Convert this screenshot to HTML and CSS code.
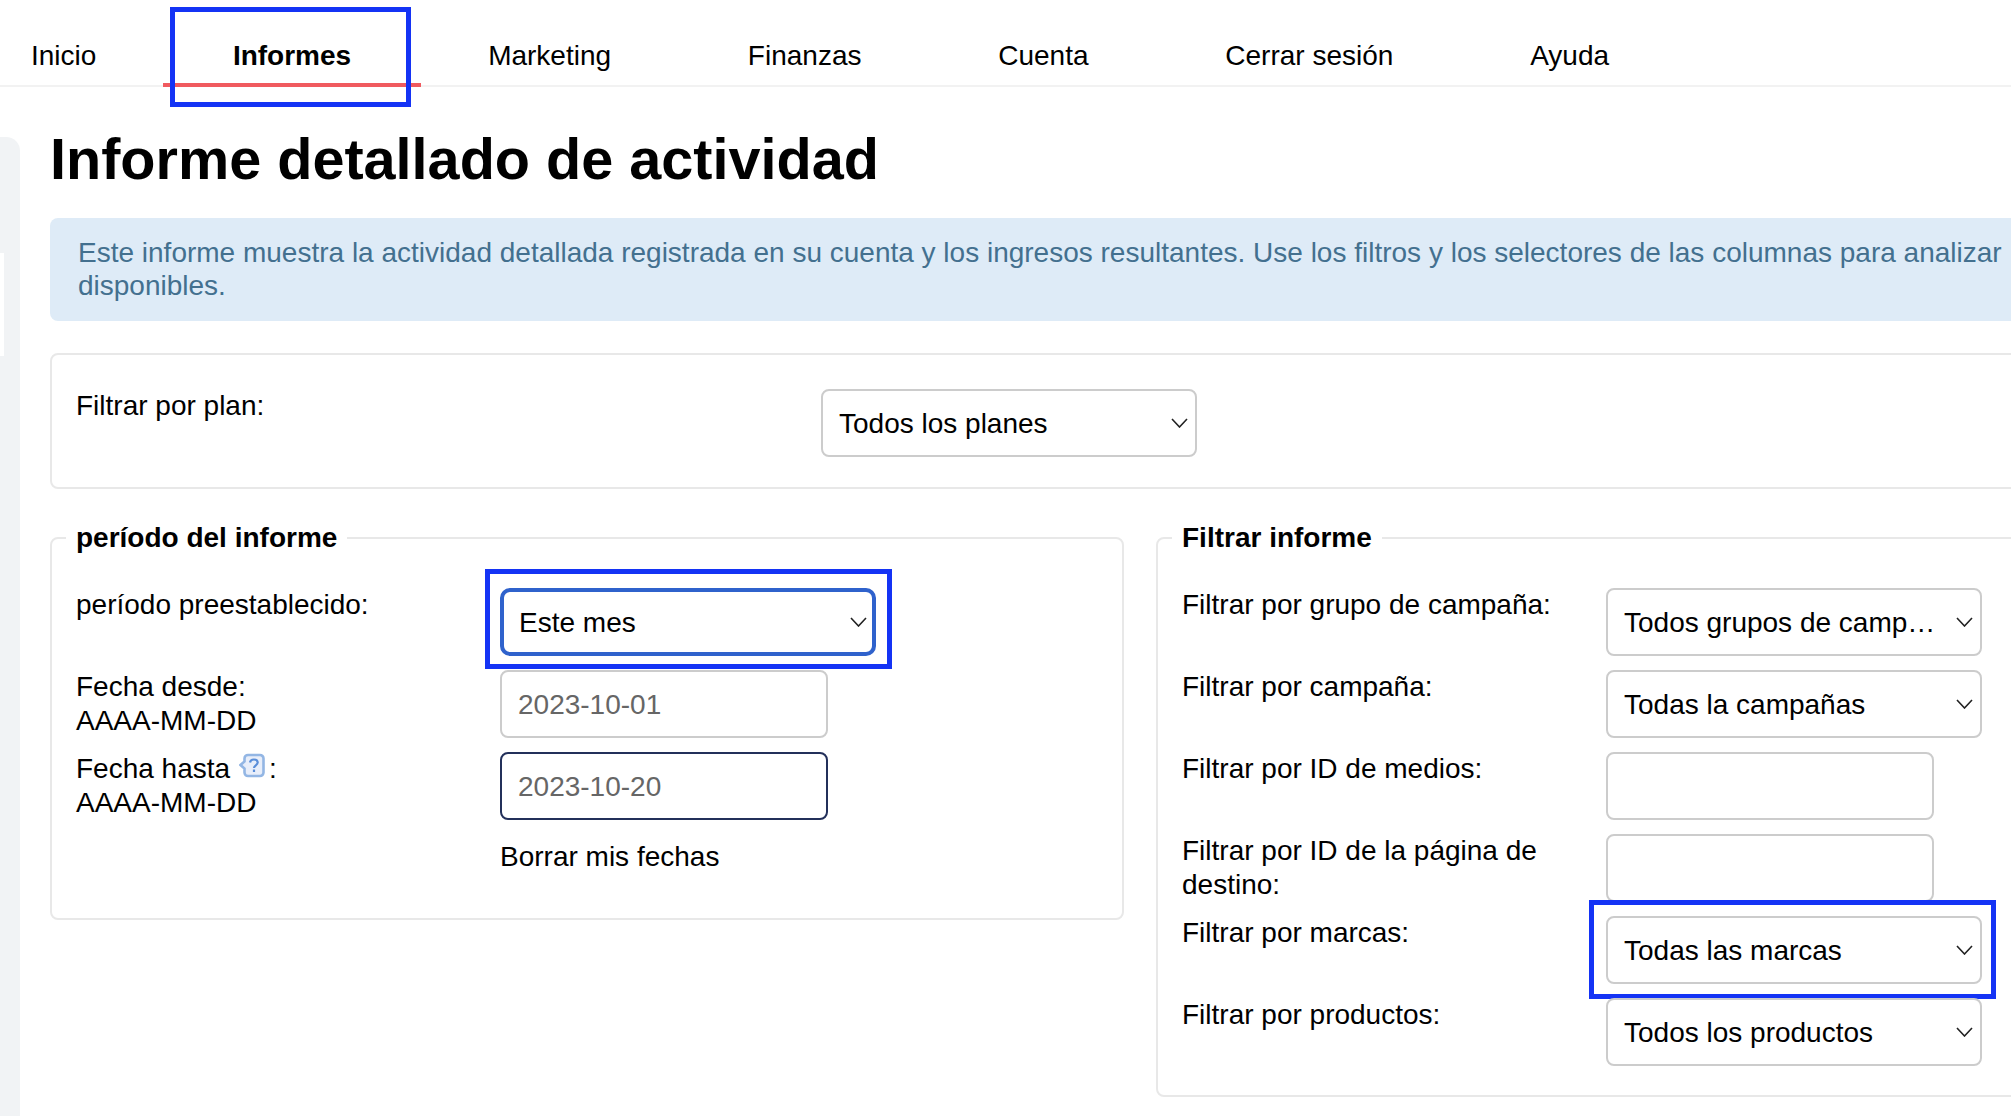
FILE: index.html
```html
<!DOCTYPE html>
<html lang="es">
<head>
<meta charset="utf-8">
<title>Informe detallado de actividad</title>
<link rel="stylesheet" href="styles.css">
</head>
<body>
<nav class="nav">
  <a class="nav-item nav-first">Inicio</a>
  <a class="nav-item nav-active">Informes<span class="mark mark-nav"></span></a>
  <a class="nav-item">Marketing</a>
  <a class="nav-item">Finanzas</a>
  <a class="nav-item">Cuenta</a>
  <a class="nav-item">Cerrar sesión</a>
  <a class="nav-item">Ayuda</a>
</nav>
<div class="app">
  <aside class="sidebar"><div class="sidebar-notch"></div></aside>
  <main class="main">
    <h1 class="title">Informe detallado de actividad</h1>
    <p class="alert">Este informe muestra la actividad detallada registrada en su cuenta y los ingresos resultantes. Use los filtros y los selectores de las columnas para analizar disponibles.</p>
    <section class="plan">
      <label class="plan-label">Filtrar por plan:</label>
      <select class="control select"><option>Todos los planes</option></select>
    </section>
    <div class="columns">
      <fieldset class="group">
        <legend class="legend">período del informe</legend>
        <div class="rows">
          <label class="row-label">período preestablecido:</label>
          <div class="cell">
            <select class="control select select-focus"><option>Este mes</option></select>
            <span class="mark mark-period"></span>
          </div>
          <label class="row-label">Fecha desde:<br>AAAA-MM-DD</label>
          <div class="cell"><input class="control input" value="2023-10-01"></div>
          <label class="row-label">Fecha hasta<svg class="help" viewBox="0 0 26 25" width="26" height="25"><path d="M9 2h12a3.500 3.500 0 0 1 3.500 3.500v14A3.500 3.500 0 0 1 21 23H9a3.500 3.500 0 0 1-3.500-3.500v-4L1.500 12l4-3.500v-3A3.500 3.500 0 0 1 9 2z" fill="#e8eefa" stroke="#93b6e4" stroke-width="2.600"/><path d="M11 9.500c.3-2 1.900-3 3.900-3 2.300 0 3.800 1.300 3.800 3.100 0 2.700-3.700 2.800-3.700 5.400M15 16.500v2.500" fill="none" stroke="#5a8ed9" stroke-width="2.200"/></svg>:<br>AAAA-MM-DD</label>
          <div class="cell"><input class="control input input-dark" value="2023-10-20"></div>
          <span></span>
          <a class="clear">Borrar mis fechas</a>
        </div>
      </fieldset>
      <fieldset class="group">
        <legend class="legend">Filtrar informe</legend>
        <div class="rows">
          <label class="row-label">Filtrar por grupo de campaña:</label>
          <div class="cell"><select class="control select"><option>Todos grupos de campaña</option></select></div>
          <label class="row-label">Filtrar por campaña:</label>
          <div class="cell"><select class="control select"><option>Todas la campañas</option></select></div>
          <label class="row-label">Filtrar por ID de medios:</label>
          <div class="cell"><input class="control input"></div>
          <label class="row-label">Filtrar por ID de la página de destino:</label>
          <div class="cell"><input class="control input"></div>
          <label class="row-label">Filtrar por marcas:</label>
          <div class="cell">
            <select class="control select"><option>Todas las marcas</option></select>
            <span class="mark mark-brand"></span>
          </div>
          <label class="row-label">Filtrar por productos:</label>
          <div class="cell"><select class="control select"><option>Todos los productos</option></select></div>
        </div>
      </fieldset>
    </div>
  </main>
</div>
</body>
</html>
```

FILE: styles.css
```css
* { box-sizing: border-box; }
html, body { margin: 0; height: 1116px; overflow: hidden; background: #fff; }
body { font: 28px/34px "Liberation Sans", Arial, sans-serif; color: #000; width: 2011px; }

.nav { display: flex; height: 87px; border-bottom: 2px solid #f2f2f2; }
.nav-item { padding: 39px 68.400px 0; height: 85px; color: #000; white-space: nowrap; }
.nav-first { padding-left: 31px; padding-right: 66.500px; }
.nav-active { position: relative; font-weight: 700; height: 87px; border-bottom: 4px solid #f05a5f; padding-left: 70px; padding-right: 70px; margin-right: -1.400px; }

.mark { position: absolute; border: 5px solid #1433f5; pointer-events: none; }
.mark-nav { left: 7px; top: 7px; width: 241px; height: 100px; }
.mark-period { left: -15px; top: -19px; width: 407px; height: 100px; }
.mark-brand { left: -17px; top: -16px; width: 407px; height: 99px; }

.app { display: flex; height: 1029px; }
.sidebar { flex: none; width: 20px; margin-top: 50px; padding-top: 116px; background: #f1f3f5; border-top-right-radius: 14px; }
.sidebar-notch { width: 4px; height: 103px; background: #fff; }
.main { flex: none; width: 2100px; margin-left: 30px; }

.title { margin: 37px 0 24px; font-size: 57.600px; line-height: 70px; font-weight: 700; }
.alert { margin: 0 0 32px; padding: 18px 28px 19px; line-height: 33px; background: #deebf7; color: #43708f; border-radius: 8px; }

.plan { display: grid; grid-template-columns: 745px auto; justify-content: start; height: 136px; padding: 34px 24px 0; border: 2px solid #e8e8e8; border-radius: 8px; margin-bottom: 32px; }
.plan .select { width: 376px; }

.columns { display: grid; grid-template-columns: 1074px 1fr; gap: 32px; align-items: start; }
.group { min-width: 0; margin: 0; padding: 33px 24px 29px; border: 2px solid #e8e8e8; border-radius: 8px; }
.legend { margin-left: -10px; padding: 0 10px; font-weight: 700; }

.rows { display: grid; grid-template-columns: 424px 1fr; row-gap: 14px; }
.row-label { display: block; }
.cell { position: relative; height: 68px; }
.clear { display: block; margin: 6px 0 15px; }

.control { display: block; height: 68px; margin: 0; background-color: #fff; border: 2px solid #ccc; border-radius: 8px; font: 28px "Liberation Sans", Arial, sans-serif; color: #000; outline: none; }
.select { width: 376px; padding: 0 38px 0 16px; appearance: none; -webkit-appearance: none; text-overflow: ellipsis; white-space: nowrap; overflow: hidden; background-image: url("data:image/svg+xml,%3Csvg xmlns='http://www.w3.org/2000/svg' width='17' height='10' viewBox='0 0 17 10'%3E%3Cpath d='M1 1l7.500 8 7.500-8' fill='none' stroke='%23222' stroke-width='1.600'/%3E%3C/svg%3E"); background-repeat: no-repeat; background-position: right 7px center; background-size: 17px 10px; }
.select-focus { border: 4px solid #2f62cc; border-radius: 10px; padding-left: 15px; background-position: right 5px center; }
.input { width: 328px; padding: 2px 16px 0; color: #666; }
.input-dark { border-color: #23305a; }

.help { margin: 0 4px 0 9px; vertical-align: 0; }
```
